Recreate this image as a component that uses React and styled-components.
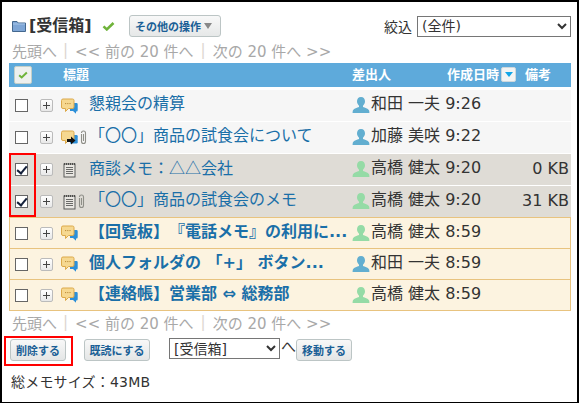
import React from "react";
import styled, { createGlobalStyle } from "styled-components";

const FONT = `"DejaVu Sans", "Noto Sans CJK JP", sans-serif`;

const Global = createGlobalStyle`
  html, body { margin: 0; padding: 0; background: #fff; }
  body { font-family: ${FONT}; }
`;

const Frame = styled.div`
  box-sizing: border-box; width: 579px; height: 403px; overflow: hidden;
  border: solid #000; border-width: 2px 2px 1px 2px; padding: 10px 6px 0 7px;
  color: #333; font-family: ${FONT};
`;
const TitleBar = styled.div`
  display: flex; align-items: center; height: 28px; padding-left: 3px;
`;
const FolderTitle = styled.div`
  font-size: 16px; font-weight: 700; margin-left: 3px; color: #333; line-height: 20px; width: 74px; white-space: nowrap;
`;
const MenuButton = styled.button`
  box-sizing: border-box; height: 22px; width: 92px; margin-left: 14px; padding: 0 0 0 5px;
  display: flex; align-items: center; gap: 3px;
  border: 1px solid #bcc5c5; border-radius: 3px; background: linear-gradient(#f8f8f8, #e6e8e8);
  color: #1a5f96; font: 700 11px ${FONT}; white-space: nowrap;
`;
const Caret = styled.span`
  width: 0; height: 0; border: 4px solid transparent; border-top: 6px solid #888; border-bottom: 0;
`;
const Filter = styled.div`
  margin-left: auto; display: flex; align-items: center; gap: 5px; font-size: 14px;
`;
const Select = styled.select`
  box-sizing: border-box; width: ${p => p.$w}px; height: 21px; padding: 0; background: #fff;
  margin-left: ${p => p.$ml || 0}px;
  border: 1px solid #767676; border-radius: 0; color: #333;
  font: 14px ${FONT};
`;
const Pager = styled.div`
  display: flex; align-items: center; height: 20px; padding-bottom: 2px; box-sizing: border-box; font-size: 15px; color: #a8a8a8;
  margin-top: ${p => p.$top || 0}px; margin-left: 3px; white-space: pre;
`;
const Sep = styled.span` color: #ddd6d0; margin: 0 7px 0 ${p => p.$l}px; `;
const Table = styled.div`
  position: relative; width: 562px; margin-top: 2px;
`;
const Header = styled.div`
  display: flex; align-items: center; height: 24px; background: #5eaadb; color: #fff;
  font-size: 13px; font-weight: 700; margin-bottom: 3px; position: relative;
`;
const CheckAll = styled.span`
  box-sizing: border-box; width: 18px; height: 18px; margin-left: 5px; display: flex;
  align-items: center; justify-content: center; background: #eef0ee;
  border: 1px solid #c4cfc8; border-radius: 2px;
`;
const HeadCell = styled.span`
  position: absolute; left: ${p => p.$x}px; top: 4px; line-height: 16px; white-space: nowrap;
`;
const SortBox = styled.span`
  position: absolute; left: 492px; top: 4px; width: 15px; height: 15px; box-sizing: border-box;
  background: #f2f4f4; border: 1px solid #cfd8dc; border-radius: 2px; display: flex;
  align-items: center; justify-content: center;
  &::after { content: ""; border: 4px solid transparent; border-top: 5px solid #11a6e8; border-bottom: 0; }
`;
const Row = styled.div`
  box-sizing: border-box; display: flex; align-items: center; height: ${p => p.$h}px;
  background: ${p => (p.$kind === "unread" ? "#fcf3e0" : p.$kind === "sel" ? "#dfdcd6" : "#f6f6f6")};
  border: ${p => (p.$kind === "unread" ? "1px solid #e8c37f" : "0")};
  border-top-width: ${p => (p.$kind === "unread" && p.$joined ? 0 : p.$kind === "unread" ? 1 : 0)}px;
  margin-bottom: ${p => p.$gap}px;
  padding-left: ${p => (p.$kind === "unread" ? 5 : 6)}px;
`;
const Check = styled.input.attrs({ type: "checkbox", readOnly: true })`
  appearance: none; box-sizing: border-box; width: 13px; height: 13px; margin: 0; flex: none;
  background: #fff; border: 1px solid #666; position: relative;
  &:checked::after {
    content: ""; position: absolute; left: 3px; top: 0; width: 4px; height: 8px;
    border: solid #14203a; border-width: 0 2px 2px 0; transform: rotate(40deg);
  }
`;
const Plus = styled.span`
  box-sizing: border-box; width: 13px; height: 13px; margin-left: 12px; flex: none; position: relative;
  border: 1px solid #bbb; border-radius: 2px; background: linear-gradient(#fff, #e8e8e8);
  &::before { content: ""; position: absolute; left: 2px; right: 2px; top: 5px; height: 1px; background: #444; }
  &::after { content: ""; position: absolute; top: 2px; bottom: 2px; left: 5px; width: 1px; background: #444; }
`;
const IconSlot = styled.span`
  display: flex; align-items: center; gap: 1px; width: 28px; margin-left: 8px; flex: none; height: 20px;
  padding-left: ${p => (p.$note ? 2 : 0)}px; box-sizing: border-box;
`;
const Title = styled.a`
  width: 263px; flex: none; font-size: 16px; font-weight: ${p => (p.$bold ? 700 : 400)};
  color: #1a6fa8; white-space: pre; overflow: hidden; line-height: 22px; padding-bottom: 3px;
  text-spacing-trim: space-all;
`;
const Cjk = styled.span` font-family: "Noto Sans CJK JP", sans-serif; `;
const Sender = styled.span`
  display: flex; align-items: center; flex: none; font-size: 16px; color: #333; white-space: pre; line-height: 20px; padding-bottom: 1px;
`;
const Who = styled.span` padding-bottom: 2px; `;
const Size = styled.span`
  margin-left: auto; padding-right: 2px; padding-bottom: 3px; font-size: 16px; color: #333; white-space: nowrap;
`;
const RedBox = styled.div`
  position: absolute; box-sizing: border-box; border: 2px solid #f00; pointer-events: none;
  left: ${p => p.$l}px; top: ${p => p.$t}px; width: ${p => p.$w}px; height: ${p => p.$h}px;
`;
const Actions = styled.div`
  position: relative; display: flex; align-items: flex-start; height: 30px; margin-top: 3px; margin-left: 1px; padding-top: 2px; box-sizing: border-box;
`;
const ActButton = styled.button`
  box-sizing: border-box; height: 22px; padding: 0; width: ${p => p.$w}px; margin: 1px 0 0 ${p => p.$ml || 0}px;
  border: 1px solid #bcc5c5; border-radius: 3px; background: linear-gradient(#f8f8f8, #e4e6e6);
  color: #1a5f96; font: 700 11px ${FONT}; white-space: nowrap;
`;
const He = styled.span` font-size: 15px; color: #333; margin-left: 1px; width: 15px; line-height: 18px; `;
const Total = styled.div` font-size: 14px; color: #333; margin: 7px 0 0 2px; line-height: 18px; letter-spacing: .2px; `;

const Chat = () => (
  <svg width="17" height="16" viewBox="0 0 17 16">
    <path d="M9 5h6.500a1.200 1.200 0 0 1 1.200 1.200v6a1.200 1.200 0 0 1-1.200 1.200H15v2.400L12 13H9z" fill="#2c8fd8" />
    <path d="M2 1h9.500A1.500 1.500 0 0 1 13 2.500V9a1.500 1.500 0 0 1-1.500 1.500H7.500L4.500 13.500V10.500H2A1.500 1.500 0 0 1 .5 9V2.500A1.500 1.500 0 0 1 2 1z" fill="#f6d890" stroke="#dca94a" />
    <path d="M4 5.600h1.200M6.200 5.600h1.200M8.400 5.600h1.200" stroke="#b98a3a" />
  </svg>
);
const Forward = () => (
  <svg width="17" height="16" viewBox="0 0 17 16" style={{ flex: "none" }}>
    <path d="M9 5h6.500a1.200 1.200 0 0 1 1.200 1.200v6a1.200 1.200 0 0 1-1.200 1.200H9z" fill="#2c8fd8" />
    <path d="M2 1h9.500A1.500 1.500 0 0 1 13 2.500V9a1.500 1.500 0 0 1-1.500 1.500H7.500L4.500 13.500V10.500H2A1.500 1.500 0 0 1 .5 9V2.500A1.500 1.500 0 0 1 2 1z" fill="#f6d890" stroke="#dca94a" />
    <path d="M6 9h4V6.500l4.500 4-4.500 4V12H6z" fill="#111" />
  </svg>
);
const Clip = () => (
  <svg width="9" height="15" viewBox="0 0 9 15" style={{ flex: "none" }}>
    <path d="M2.500 4v7.500a2 2 0 0 0 4 0V3a2 2 0 0 0-4 0M4.500 4v7" fill="none" stroke="#8f8f88" strokeWidth="1.100" />
  </svg>
);
const Note = () => (
  <svg width="13" height="16" viewBox="0 0 13 16" style={{ flex: "none" }}>
    <rect x="1" y="2" width="11" height="13" fill="#e9e7e2" stroke="#5a5a58" />
    <path d="M1.500 1v2M3.500 1v2M5.500 1v2M7.500 1v2M9.500 1v2M11.500 1v2" stroke="#4d4d4b" />
    <path d="M3 5.500h7M3 7.500h7M3 9.500h7M3 11.500h7" stroke="#6a6a68" />
  </svg>
);
const User = ({ c }) => (
  <svg width="18" height="18" viewBox="0 0 18 18" style={{ flex: "none", marginRight: 1 }}>
    <path d="M9 1c2.700 0 4 2 4 4.300 0 2-.9 3.500-2 4.400v1.300c1.800.7 5 1.500 6 3.200.4.700.4 2.300.4 2.800H.6c0-.5 0-2.100.4-2.800 1-1.700 4.200-2.500 6-3.200V9.700C5.900 8.800 5 7.300 5 5.300 5 3 6.300 1 9 1z" fill={c} />
  </svg>
);
const Tick = ({ size = 13, ml = 0 }) => (
  <svg width={size} height={size * 0.8} viewBox="0 0 13 10" style={{ marginLeft: ml }}>
    <path d="M1.500 5.200l3.300 3L11.500 1.800" fill="none" stroke="#6fb33a" strokeWidth="2.600" />
  </svg>
);
const Folder = () => (
  <svg width="14" height="12" viewBox="0 0 14 12">
    <path d="M.5 1.500h4.500l1.200 1.500h7.300v8.500H.5z" fill="#7ea6d6" stroke="#44688f" />
    <path d="M1 4h12" stroke="#a8c6e8" />
  </svg>
);

const BLUE = "#62aed0";
const GREEN = "#95dba6";
const rows = [
  { id: 1, h: 31, gap: 1, kind: "plain", icon: <Chat />, title: "懇親会の精算", who: "和田 一夫", time: "9:26", c: BLUE },
  { id: 2, h: 31, gap: 1, kind: "plain", icon: <><Forward /><Clip /></>, title: "「〇〇」商品の試食会について", who: "加藤 美咲", time: "9:22", c: BLUE },
  { id: 3, h: 31, gap: 1, kind: "sel", note: true, checked: true, icon: <Note />, title: <>商談メモ：<Cjk>△△</Cjk>会社</>, who: "高橋 健太", time: "9:20", c: GREEN, size: "0 KB" },
  { id: 4, h: 31, gap: 0, kind: "sel", note: true, checked: true, icon: <><Note /><Clip /></>, title: "「〇〇」商品の試食会のメモ", who: "高橋 健太", time: "9:20", c: GREEN, size: "31 KB" },
  { id: 5, h: 32, gap: 0, kind: "unread", icon: <Chat />, title: "【回覧板】『電話メモ』の利用に...", who: "高橋 健太", time: "8:59", c: GREEN },
  { id: 6, h: 31, gap: 0, kind: "unread", joined: true, icon: <Chat />, title: "個人フォルダの 「+」 ボタン...", who: "和田 一夫", time: "8:59", c: BLUE },
  { id: 7, h: 31, gap: 0, kind: "unread", joined: true, icon: <Chat />, title: "【連絡帳】営業部 ⇔ 総務部", who: "高橋 健太", time: "8:59", c: GREEN },
];

const PagerLine = ({ top }) => (
  <Pager $top={top}>先頭へ<Sep $l={6}>|</Sep>{"<< 前の 20 件へ"}<Sep $l={7}>|</Sep>{"次の 20 件へ >>"}</Pager>
);

export default function App() {
  return (
    <Frame>
      <Global />
      <TitleBar>
        <Folder />
        <FolderTitle>[受信箱]</FolderTitle>
        <Tick ml={-1} />
        <MenuButton>その他の操作<Caret /></MenuButton>
        <Filter>
          絞込
          <Select $w={154} defaultValue="all"><option value="all">(全件)</option></Select>
        </Filter>
      </TitleBar>
      <PagerLine top={1} />
      <Table>
        <Header>
          <CheckAll><Tick size={10} /></CheckAll>
          <HeadCell $x={54}>標題</HeadCell>
          <HeadCell $x={343}>差出人</HeadCell>
          <HeadCell $x={438}>作成日時</HeadCell>
          <SortBox />
          <HeadCell $x={516}>備考</HeadCell>
        </Header>
        {rows.map(r => (
          <Row key={r.id} $kind={r.kind} $joined={r.joined} $h={r.h} $gap={r.gap}>
            <Check defaultChecked={!!r.checked} />
            <Plus />
            <IconSlot $note={r.note}>{r.icon}</IconSlot>
            <Title $bold={r.kind === "unread"}>{r.title}</Title>
            <Sender><User c={r.c} /><Who>{r.who} {r.time}</Who></Sender>
            {r.size && <Size>{r.size}</Size>}
          </Row>
        ))}
        <RedBox $l={0} $t={90} $w={27} $h={64} />
      </Table>
      <PagerLine top={2} />
      <Actions>
        <ActButton $w={56}>削除する</ActButton>
        <ActButton $w={66} $ml={18}>既読にする</ActButton>
        <Select $w={111} $ml={19} defaultValue="in"><option value="in">[受信箱]</option></Select>
        <He>へ</He>
        <ActButton $w={56}>移動する</ActButton>
        <RedBox $l={-6} $t={0} $w={69} $h={30} />
      </Actions>
      <Total>総メモサイズ：43MB</Total>
    </Frame>
  );
}
